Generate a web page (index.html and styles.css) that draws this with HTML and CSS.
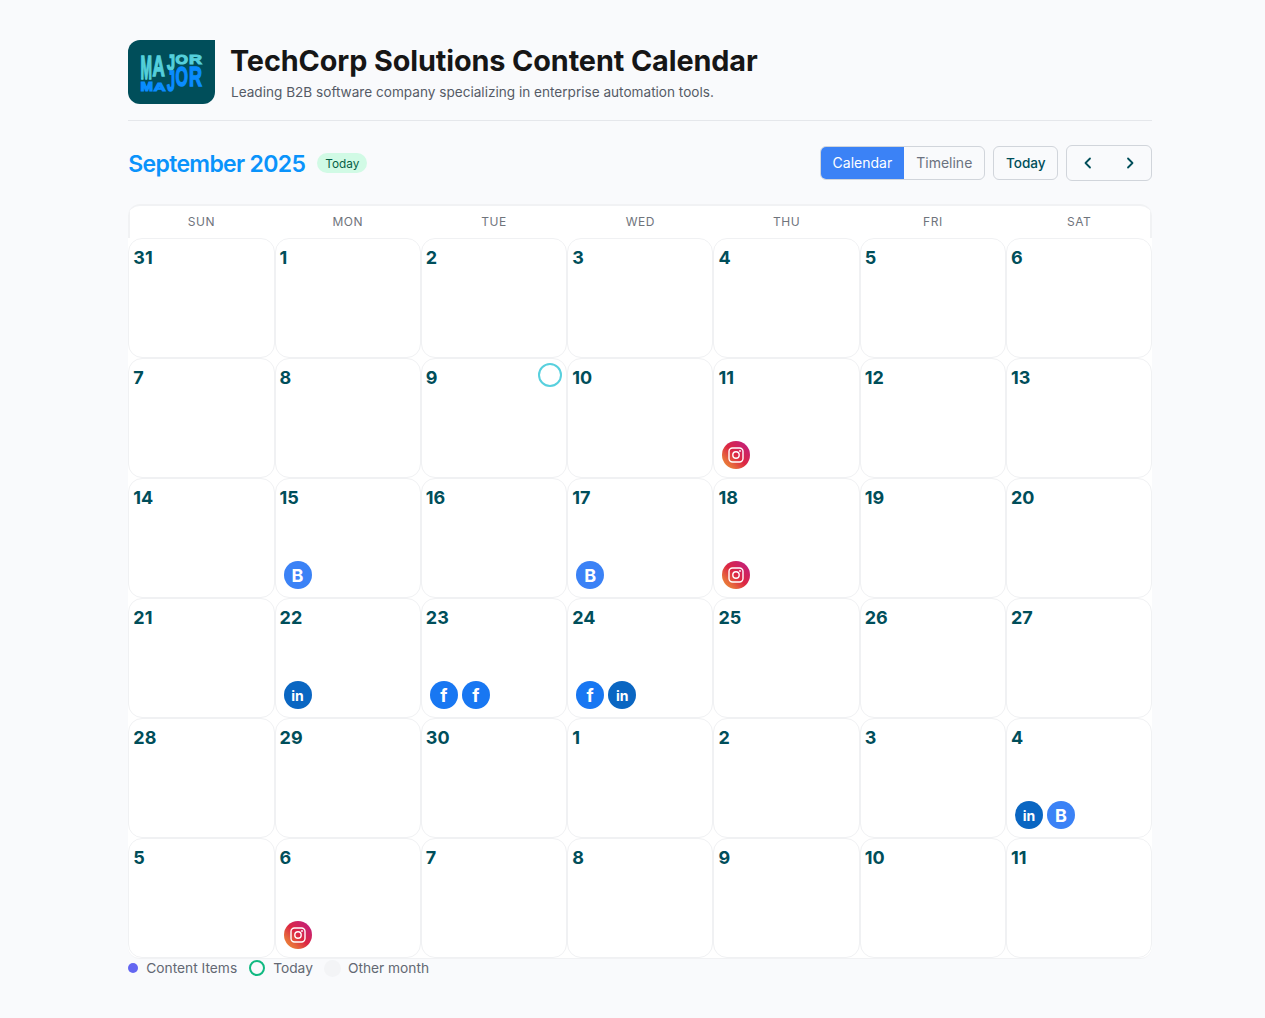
FILE: index.html
```html
<!DOCTYPE html>
<html lang="en">
<head>
    <meta charset="UTF-8">
    <title>TechCorp Solutions Content Calendar</title>
    <link rel="stylesheet" href="styles.css">
</head>
<body>
    <div class="page">
        <header class="brand">
            <div class="logo">
                <svg width="87" height="64" viewBox="0 0 87 64">
                    <g class="logo-top">
                        <text transform="translate(12.5 39) scale(1.38 3.29)">M</text>
                        <text transform="translate(24.5 35.5) scale(1.7 2.88)">A</text>
                        <text transform="translate(39 29.5) scale(1.44 2.2)">J</text>
                        <text transform="translate(47.5 24) scale(1.6 1.37)">O</text>
                        <text transform="translate(61 24) scale(1.8 1.37)">R</text>
                    </g>
                    <g class="logo-bottom">
                        <text transform="translate(12.5 50.5) scale(1.5 1.23)">M</text>
                        <text transform="translate(25.5 50.5) scale(1.7 1.17)">A</text>
                        <text transform="translate(39 51) scale(1.44 2.88)">J</text>
                        <text transform="translate(47.5 46) scale(1.6 2.74)">O</text>
                        <text transform="translate(61 46) scale(1.8 2.74)">R</text>
                    </g>
                </svg>
            </div>
            <div class="brand-text">
                <h1>TechCorp Solutions Content Calendar</h1>
                <p>Leading B2B software company specializing in enterprise automation tools.</p>
            </div>
        </header>

        <div class="toolbar">
            <div class="toolbar-left">
                <h2>September 2025</h2>
                <span class="badge">Today</span>
            </div>
            <div class="toolbar-right">
                <div class="segment">
                    <button class="seg-btn seg-active">Calendar</button>
                    <button class="seg-btn">Timeline</button>
                </div>
                <button class="btn-today">Today</button>
                <div class="nav-btns">
                    <button class="nav-btn"><svg width="16" height="16" viewBox="0 0 16 16"><path d="M10 3.5 5.5 8l4.5 4.5" /></svg></button>
                    <button class="nav-btn"><svg width="16" height="16" viewBox="0 0 16 16"><path d="M6 3.5 10.5 8 6 12.5" /></svg></button>
                </div>
            </div>
        </div>

        <div class="calendar">
            <div class="weekdays">
                <div>SUN</div><div>MON</div><div>TUE</div><div>WED</div><div>THU</div><div>FRI</div><div>SAT</div>
            </div>
            <div class="days">
                <div class="day"><span class="num">31</span></div>
                <div class="day"><span class="num">1</span></div>
                <div class="day"><span class="num">2</span></div>
                <div class="day"><span class="num">3</span></div>
                <div class="day"><span class="num">4</span></div>
                <div class="day"><span class="num">5</span></div>
                <div class="day"><span class="num">6</span></div>

                <div class="day"><span class="num">7</span></div>
                <div class="day"><span class="num">8</span></div>
                <div class="day"><span class="num">9</span><span class="today-ring"></span></div>
                <div class="day"><span class="num">10</span></div>
                <div class="day"><span class="num">11</span>
                    <div class="events"><span class="ev ev-ig"><svg width="16" height="16" viewBox="0 0 16 16"><rect x="1" y="1" width="14" height="14" rx="3.5"/><circle cx="8" cy="8" r="3.2"/><circle class="ig-dot" cx="12" cy="4" r="0.9"/></svg></span></div>
                </div>
                <div class="day"><span class="num">12</span></div>
                <div class="day"><span class="num">13</span></div>

                <div class="day"><span class="num">14</span></div>
                <div class="day"><span class="num">15</span>
                    <div class="events"><span class="ev ev-b">B</span></div>
                </div>
                <div class="day"><span class="num">16</span></div>
                <div class="day"><span class="num">17</span>
                    <div class="events"><span class="ev ev-b">B</span></div>
                </div>
                <div class="day"><span class="num">18</span>
                    <div class="events"><span class="ev ev-ig"><svg width="16" height="16" viewBox="0 0 16 16"><rect x="1" y="1" width="14" height="14" rx="3.5"/><circle cx="8" cy="8" r="3.2"/><circle class="ig-dot" cx="12" cy="4" r="0.9"/></svg></span></div>
                </div>
                <div class="day"><span class="num">19</span></div>
                <div class="day"><span class="num">20</span></div>

                <div class="day"><span class="num">21</span></div>
                <div class="day"><span class="num">22</span>
                    <div class="events"><span class="ev ev-in">in</span></div>
                </div>
                <div class="day"><span class="num">23</span>
                    <div class="events"><span class="ev ev-fb">f</span><span class="ev ev-fb">f</span></div>
                </div>
                <div class="day"><span class="num">24</span>
                    <div class="events"><span class="ev ev-fb">f</span><span class="ev ev-in">in</span></div>
                </div>
                <div class="day"><span class="num">25</span></div>
                <div class="day"><span class="num">26</span></div>
                <div class="day"><span class="num">27</span></div>

                <div class="day"><span class="num">28</span></div>
                <div class="day"><span class="num">29</span></div>
                <div class="day"><span class="num">30</span></div>
                <div class="day"><span class="num">1</span></div>
                <div class="day"><span class="num">2</span></div>
                <div class="day"><span class="num">3</span></div>
                <div class="day"><span class="num">4</span>
                    <div class="events"><span class="ev ev-in">in</span><span class="ev ev-b">B</span></div>
                </div>

                <div class="day"><span class="num">5</span></div>
                <div class="day"><span class="num">6</span>
                    <div class="events"><span class="ev ev-ig"><svg width="16" height="16" viewBox="0 0 16 16"><rect x="1" y="1" width="14" height="14" rx="3.5"/><circle cx="8" cy="8" r="3.2"/><circle class="ig-dot" cx="12" cy="4" r="0.9"/></svg></span></div>
                </div>
                <div class="day"><span class="num">7</span></div>
                <div class="day"><span class="num">8</span></div>
                <div class="day"><span class="num">9</span></div>
                <div class="day"><span class="num">10</span></div>
                <div class="day"><span class="num">11</span></div>
            </div>
        </div>

        <div class="legend">
            <div class="legend-item"><span class="lg-dot"></span>Content Items</div>
            <div class="legend-item"><span class="lg-ring"></span>Today</div>
            <div class="legend-item legend-other"><span class="lg-other"></span>Other month</div>
        </div>
    </div>
</body>
</html>
```

FILE: styles.css
```css
html {
    background-color: #f9fafc;
    color: #111;
    font-family: "Inter", "Liberation Sans", sans-serif;
}

body {
    margin: 0;
    padding: 0;
}

.page {
    width: 1024px;
    margin-left: 128.3px;
    padding-top: 40px;
}

.brand {
    display: flex;
    align-items: center;
    gap: 15.7px;
    height: 64px;
    padding-bottom: 16px;
    border-bottom: 1px solid #e5e7eb;
}

.logo {
    width: 87px;
    height: 64px;
    flex: none;
    background-color: #004e5a;
    border-radius: 12px 0 12px 12px;
    overflow: hidden;
}

.logo svg {
    display: block;
    font-family: "Liberation Sans", sans-serif;
    font-size: 10px;
    font-weight: 700;
}

.logo text {
    stroke-width: 1.2px;
    vector-effect: non-scaling-stroke;
}

.logo-top {
    fill: #55d0dc;
    stroke: #55d0dc;
}

.logo-bottom {
    fill: #0a8cff;
    stroke: #0a8cff;
}

.brand-text h1 {
    margin: 0 0 0 -1px;
    font-size: 28.8px;
    line-height: 36px;
    font-weight: 700;
    letter-spacing: -0.1px;
    color: #161616;
}

.brand-text p {
    margin: 3px 0 0;
    font-size: 13.6px;
    line-height: 20px;
    color: #555b66;
}

.toolbar {
    display: flex;
    justify-content: space-between;
    align-items: center;
    margin-top: 24px;
    height: 36px;
}

.toolbar-left {
    display: flex;
    align-items: center;
    gap: 12px;
}

.toolbar-left h2 {
    margin: 0;
    padding-top: 2px;
    font-size: 23px;
    line-height: 32px;
    font-weight: 600;
    letter-spacing: -0.67px;
    color: #0a93fb;
}

.badge {
    padding: 0 8px;
    height: 20px;
    line-height: 22px;
    font-size: 11.8px;
    color: #065f46;
    background-color: #d1fae5;
    border-radius: 10px;
}

.toolbar-right {
    display: flex;
    align-items: center;
    gap: 8px;
}

.segment {
    display: flex;
    height: 34px;
    box-sizing: border-box;
    border: 1px solid #d1d5db;
    border-radius: 6px;
    overflow: hidden;
}

button {
    font-family: inherit;
    font-size: 14px;
    cursor: pointer;
}

.seg-btn {
    border: 0;
    padding: 0 12px 2px;
    background: transparent;
    color: #6b7280;
}

.seg-active {
    background-color: #3b82f6;
    color: #fff;
}

.btn-today {
    height: 34px;
    width: 65px;
    padding: 0;
    font-size: 13.6px;
    font-weight: 500;
    color: #004e5a;
    background: transparent;
    border: 1px solid #d1d5db;
    border-radius: 6px;
}

.nav-btns {
    display: flex;
    width: 86px;
    height: 36px;
    box-sizing: border-box;
    border: 1px solid #d1d5db;
    border-radius: 6px;
}

.nav-btn {
    flex: 1;
    display: flex;
    align-items: center;
    justify-content: center;
    border: 0;
    padding: 0;
    background: transparent;
}

.nav-btn path {
    fill: none;
    stroke: #004e5a;
    stroke-width: 1.8;
    stroke-linecap: round;
    stroke-linejoin: round;
}

.calendar {
    margin-top: 23px;
    background-color: #fff;
    border-top: 2px solid #f1f2f4;
    border-bottom: 1px solid #f1f2f4;
    border-radius: 12px;
    overflow: hidden;
}

.weekdays {
    display: grid;
    grid-template-columns: repeat(7, 1fr);
    box-sizing: border-box;
    height: 32px;
    padding-bottom: 2px;
    align-items: center;
    text-align: center;
    font-size: 12px;
    letter-spacing: 0.5px;
    color: #6f747c;
    box-shadow: inset 2px 0 #f1f2f4, inset -2px 0 #f1f2f4;
}

.days {
    display: grid;
    grid-template-columns: repeat(7, 1fr);
    grid-auto-rows: 120px;
}

.day {
    position: relative;
    box-sizing: border-box;
    display: flex;
    flex-direction: column;
    justify-content: space-between;
    padding: 8px 4px 8px 4px;
    border: 1px solid #f0f1f3;
    border-radius: 14px;
}

.num {
    font-size: 18px;
    line-height: 22px;
    font-weight: 700;
    color: #004e5a;
}

.today-ring {
    position: absolute;
    top: 4px;
    right: 4px;
    width: 24px;
    height: 24px;
    box-sizing: border-box;
    border: 2px solid #58d0de;
    border-radius: 50%;
}

.events {
    display: flex;
    gap: 4px;
    padding-left: 4px;
}

.ev {
    display: flex;
    align-items: center;
    justify-content: center;
    width: 28px;
    height: 28px;
    border-radius: 50%;
    color: #fff;
    font-weight: 700;
    font-size: 14px;
}

.ev-b {
    background-color: #3b82f6;
    font-size: 18px;
}

.ev-in {
    background-color: #0a66c2;
}

.ev-fb {
    background-color: #1877f2;
    font-size: 18px;
}

.ev-ig {
    background: linear-gradient(45deg, #f09433, #e6683c 25%, #dc2743 50%, #cc2366 75%, #bc1888);
}

.ev-ig svg {
    fill: none;
    stroke: #fff;
    stroke-width: 1.4;
}

.ev-ig .ig-dot {
    fill: #fff;
    stroke: none;
}

.legend {
    display: flex;
    align-items: center;
    gap: 12px;
    height: 18px;
    font-size: 13.75px;
    color: #636873;
}

.legend-item {
    display: flex;
    align-items: center;
    gap: 8px;
}

.legend-other {
    gap: 7px;
    margin-left: -1px;
}

.lg-dot {
    width: 10px;
    height: 10px;
    border-radius: 50%;
    background-color: #6366f1;
}

.lg-ring {
    width: 16px;
    height: 16px;
    box-sizing: border-box;
    border: 2px solid #10b981;
    border-radius: 50%;
}

.lg-other {
    width: 17px;
    height: 17px;
    border-radius: 50%;
    background-color: #f3f4f6;
}
```
